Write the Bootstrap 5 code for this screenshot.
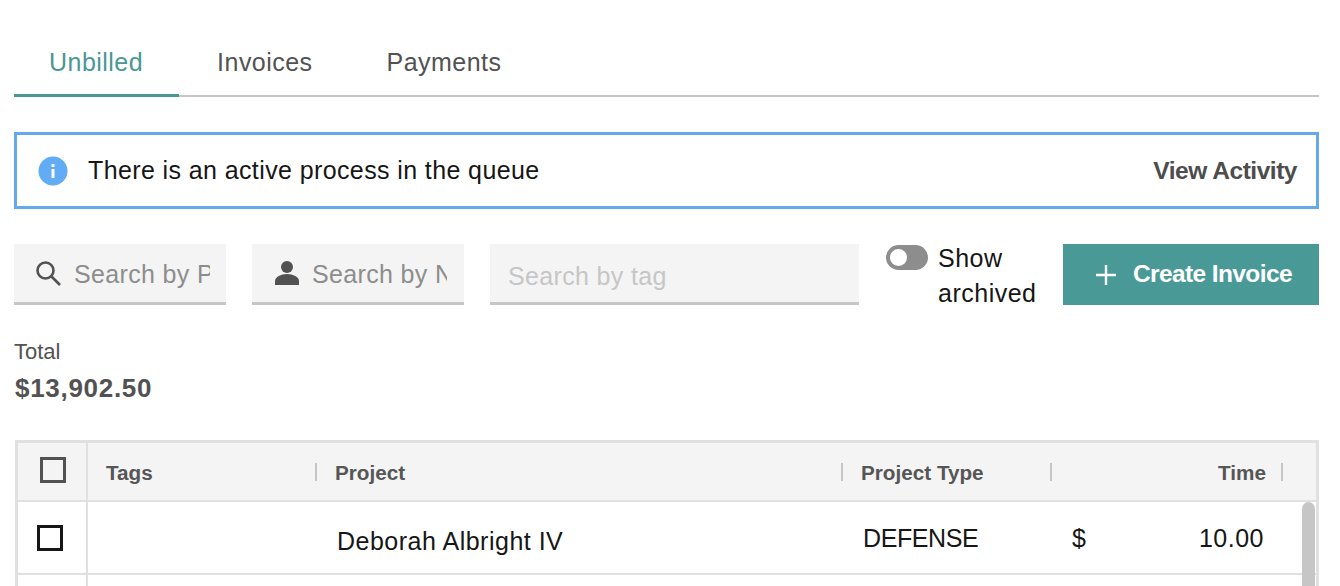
<!DOCTYPE html>
<html lang="en">
<head>
  <meta charset="UTF-8">
  <title>Billing</title>
  <link rel="stylesheet" href="https://cdn.jsdelivr.net/npm/bootstrap@5.3.3/dist/css/bootstrap.min.css">
  <style>
    html, body { height: 586px; overflow: hidden; }
    body { background: #fff; color: #161616; font-family: "Liberation Sans", Arial, sans-serif; }
    .page-wrap { padding: 0 21px 0 14px; }
    .tab-bar { height: 97px; padding-top: 28px; border-bottom: 2px solid #c6c6c6; align-items: stretch; margin-bottom: 35px; }
    .tab-link { display: flex; align-items: flex-start; padding: 18px 37px 0; height: 69px; margin-bottom: -2px; font-size: 25px; line-height: 32px; letter-spacing: .47px; color: #525252; text-decoration: none; border-bottom: 3px solid transparent; }
    .tab-link.is-active { color: #4a9793; border-bottom-color: #4a9793; padding: 18px 36px 0 35px; }
    .tab-link.is-active + .tab-link { padding-left: 38px; }
    .notice-box { height: 77px; border: 3px solid #64aaeb; padding: 0 19px 0 21px; margin-bottom: 35px; }
    .notice-text { font-size: 25px; letter-spacing: .39px; margin-left: 20px; }
    .notice-action { font-size: 24.5px; font-weight: 700; color: #4d4d4d; text-decoration: none; letter-spacing: -.47px; padding-top: 2px; }
    .filter-row { height: 61px; margin-bottom: 34px; }
    .filter-box { width: 212px; height: 61px; margin-right: 26px; background: #f4f4f4; border-bottom: 3px solid #c6c6c6; padding-left: 20px; overflow: hidden; flex-shrink: 0; }
    .filter-box svg { flex-shrink: 0; }
    .filter-box input { border: 0; background: transparent; outline: 0; min-width: 0; width: 100%; font-size: 25px; letter-spacing: .35px; color: #161616; font-family: inherit; padding: 4px 0 0; }
    .filter-box input::placeholder { color: #8d8d8d; opacity: 1; }
    .filter-box.filter-icon input { margin-left: 12px; margin-right: 16px; }
    .filter-box.filter-user { padding-left: 21px; }
    .filter-box.filter-user input { margin-left: 11px; margin-right: 17px; }
    .filter-box.filter-tag { width: 369px; padding-left: 18px; margin-right: 27px; }
    .filter-box.filter-tag input { padding-top: 8px; }
    .filter-box.filter-tag input::placeholder { color: #c6c6c6; }
    .toggle-wrap { width: 177px; flex-shrink: 0; font-size: 25px; line-height: 35px; letter-spacing: .5px; }
    .toggle-track { width: 42px; height: 25px; margin: 1px 10px 0 0; border-radius: 13px; background: #8d8d8d; flex-shrink: 0; padding: 4px; }
    .toggle-knob { display: block; width: 17px; height: 17px; border-radius: 50%; background: #fff; }
    .toggle-text { margin-top: -3px; }
    .create-btn { width: 256px; height: 61px; border-radius: 0; border: 0; background: #499a97; color: #fff; font-size: 24.5px; font-weight: 700; letter-spacing: -.6px; padding: 0 27px 0 0; }
    .create-btn:hover { background: #499a97; color: #fff; }
    .create-btn svg { margin-right: 17px; }
    .total-label { font-size: 22px; line-height: 26px; color: #525252; }
    .total-value { font-size: 26px; line-height: 34px; letter-spacing: .7px; font-weight: 700; color: #525252; margin-top: 6px; margin-bottom: 35px; padding-left: 1px; }
    .grid-wrap { position: relative; height: 146px; overflow: hidden; margin-left: 1px; border: 3px solid #e0e0e0; border-bottom: 0; }
    .data-grid { table-layout: fixed; width: 100%; margin: 0; border-collapse: collapse; }
    .data-grid th { height: 58px; background: #f4f4f4; font-size: 20.7px; font-weight: 700; color: #565656; padding: 2px 0 0 18px; border-bottom: 2px solid #e0e0e0; vertical-align: middle; position: relative; }
    .data-grid td { height: 73px; font-size: 25px; letter-spacing: .5px; color: #161616; padding: 8px 0 0 20px; border-bottom: 2px solid #e0e0e0; vertical-align: middle; }
    .data-grid .check-col { padding: 0; border-right: 2px solid #e0e0e0; }
    .th-sep::after { content: ""; position: absolute; right: 0; top: 20px; width: 2px; height: 18px; background: #c6c6c6; }
    .data-grid th.th-time { text-align: right; padding-right: 17px; }
    .box-check { display: block; width: 26px; height: 26px; border: 3px solid #525252; }
    th .box-check { margin: -4px 0 0 22px; }
    td .box-check { border-color: #161616; margin: 0 0 0 19px; }
    .cell-up { position: relative; top: -3px; }
    .cell-type { letter-spacing: -.4px; }
    .cell-money { display: flex; justify-content: space-between; padding-right: 19px; }
    .grid-thumb { position: absolute; right: 1px; top: 59px; width: 13px; height: 90px; border-radius: 7px; background: #c6c6c6; }
  </style>
</head>
<body>
  <div class="page-wrap">
    <div class="d-flex tab-bar">
      <a class="tab-link is-active" href="#">Unbilled</a>
      <a class="tab-link" href="#">Invoices</a>
      <a class="tab-link" href="#">Payments</a>
    </div>

    <div class="d-flex align-items-center notice-box">
      <svg width="30" height="30" viewBox="0 0 30 30"><circle cx="15" cy="15" r="14.5" fill="#62abf5"/><rect x="13.5" y="13" width="3" height="9" fill="#fff"/><rect x="13.5" y="8" width="3" height="3" fill="#fff"/></svg>
      <span class="notice-text flex-grow-1">There is an active process in the queue</span>
      <a class="notice-action" href="#">View Activity</a>
    </div>

    <div class="d-flex filter-row">
      <div class="d-flex align-items-center filter-box filter-icon">
        <svg width="28" height="28" viewBox="0 0 28 28" fill="none" stroke="#525252" stroke-width="2.6"><circle cx="11.5" cy="11.5" r="8"/><path d="M17.5 17.5L26 26"/></svg>
        <input type="text" placeholder="Search by Project">
      </div>
      <div class="d-flex align-items-center filter-box filter-icon filter-user">
        <svg width="28" height="28" viewBox="0 0 28 28" fill="#525252"><circle cx="14" cy="8" r="6"/><path d="M2 26v-4c0-4 6-7 12-7s12 3 12 7v4z"/></svg>
        <input type="text" placeholder="Search by Name">
      </div>
      <div class="d-flex align-items-center filter-box filter-tag">
        <input type="text" placeholder="Search by tag">
      </div>
      <div class="d-flex toggle-wrap">
        <span class="toggle-track"><span class="toggle-knob"></span></span>
        <span class="toggle-text">Show archived</span>
      </div>
      <button class="btn create-btn d-flex align-items-center justify-content-end" type="button">
        <svg width="20" height="20" viewBox="0 0 20 20" fill="none" stroke="#fff" stroke-width="2.4"><path d="M10 0v20M0 10h20"/></svg>
        Create Invoice
      </button>
    </div>

    <div class="total-label">Total</div>
    <div class="total-value">$13,902.50</div>

    <div class="grid-wrap">
      <table class="data-grid">
        <colgroup>
          <col style="width:69px"><col style="width:230px"><col style="width:526px"><col style="width:209px"><col style="width:231px"><col>
        </colgroup>
        <thead>
          <tr>
            <th class="check-col"><span class="box-check"></span></th>
            <th class="th-sep">Tags</th>
            <th class="th-sep">Project</th>
            <th class="th-sep">Project Type</th>
            <th class="th-sep th-time">Time</th>
            <th></th>
          </tr>
        </thead>
        <tbody>
          <tr>
            <td class="check-col"><span class="box-check"></span></td>
            <td></td>
            <td>Deborah Albright IV</td>
            <td><span class="cell-up cell-type">DEFENSE</span></td>
            <td><div class="cell-money cell-up"><span>$</span><span>10.00</span></div></td>
            <td></td>
          </tr>
          <tr>
            <td class="check-col"></td><td></td><td></td><td></td><td></td><td></td>
          </tr>
        </tbody>
      </table>
      <div class="grid-thumb"></div>
    </div>
  </div>
</body>
</html>
